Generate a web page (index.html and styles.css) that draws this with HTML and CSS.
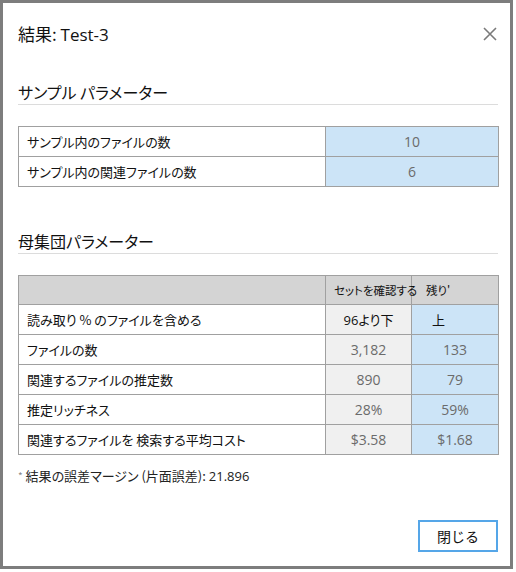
FILE: index.html
```html
<!DOCTYPE html>
<html lang="ja">
<head>
<meta charset="utf-8">
<link rel="stylesheet" href="styles.css">
</head>
<body>
<div class="dialog">
  <div class="titlebar">
    <div class="title">結果: <span class="lat">Test-3</span></div>
    <svg class="close" width="14" height="14" viewBox="0 0 14 14"><path d="M1 1L13 13M13 1L1 13" stroke="#7a7a7a" stroke-width="1.6" fill="none"/></svg>
  </div>

  <h2 class="section first">サンプル パラメーター</h2>
  <table class="grid t1">
    <colgroup><col class="w1"><col></colgroup>
    <tr><td class="label">サンプル内のファイルの数</td><td class="num blue">10</td></tr>
    <tr><td class="label">サンプル内の関連ファイルの数</td><td class="num blue">6</td></tr>
  </table>

  <h2 class="section second">母集団パラメーター</h2>
  <table class="grid t2">
    <colgroup><col class="w1"><col class="w2"><col></colgroup>
    <tr class="head"><th class="c1"></th><th class="c2">セットを確認する</th><th class="c3">残り'</th></tr>
    <tr><td class="label">読み取り % のファイルを含める</td><td class="gray dark"><span class="lat">96</span>より下</td><td class="blue dark left">上</td></tr>
    <tr><td class="label">ファイルの数</td><td class="num gray">3,182</td><td class="num blue">133</td></tr>
    <tr><td class="label">関連するファイルの推定数</td><td class="num gray">890</td><td class="num blue">79</td></tr>
    <tr><td class="label">推定リッチネス</td><td class="num gray">28%</td><td class="num blue">59%</td></tr>
    <tr><td class="label">関連するファイルを 検索する平均コスト</td><td class="num gray">$3.58</td><td class="num blue">$1.68</td></tr>
  </table>

  <p class="note"><span class="star">*</span> 結果の誤差マージン (片面誤差): <span class="lat">21.896</span></p>

  <div class="footer">
    <button class="btn">閉じる</button>
  </div>
</div>
</body>
</html>
```
FILE: styles.css
```css
html, body {
  margin: 0;
  padding: 0;
  background: #ffffff;
}
body {
  font-family: "Noto Sans CJK JP", "Noto Sans", sans-serif;
  font-feature-settings: "palt" 1;
  color: #1a1a1a;
}
.dialog {
  box-sizing: border-box;
  width: 513px;
  height: 569px;
  border: 3px solid #7d7d7d;
  padding: 0 12px 0 15px;
  display: flex;
  flex-direction: column;
}
.lat {
  font-family: "Open Sans", "Noto Sans", sans-serif;
}
.titlebar {
  display: flex;
  justify-content: space-between;
  align-items: center;
  height: 24px;
  margin-top: 19px;
}
.title {
  font-size: 17px;
  line-height: 24px;
  color: #111;
}
.close {
  margin-right: 1px;
}
.section {
  margin: 0;
  font-weight: normal;
  font-size: 16px;
  line-height: 22px;
  padding-bottom: 1px;
  border-bottom: 1px solid #dcdcdc;
  color: #111;
}
.section.first {
  margin-top: 35px;
}
.section.second {
  margin-top: 43px;
}
.grid {
  border-collapse: collapse;
  table-layout: fixed;
  width: 481px;
  font-size: 13px;
}
.grid col.w1 { width: 307px; }
.grid col.w2 { width: 86px; }
.grid td, .grid th {
  border: 1px solid #a0a0a0;
  padding: 0;
  height: 29px;
  line-height: 20px;
}
.t1 {
  margin-top: 21px;
}
.t2 {
  margin-top: 21px;
}
.label {
  padding-left: 8px !important;
  text-align: left;
  color: #111;
  background: #fff;
}
.num {
  text-align: center;
  color: #6b6b6b;
  font-family: "Open Sans", "Noto Sans", sans-serif;
  font-size: 14px;
}
.blue {
  background: #cce4f7;
}
.gray {
  background: #f0f0f0;
}
.dark {
  color: #111;
  text-align: center;
}
.left {
  text-align: left;
  padding-left: 20px !important;
}
.head th {
  background: #d4d4d4;
  font-weight: normal;
  font-size: 11.5px;
  color: #111;
  height: 28px;
}
.head .c2 { text-align: left; padding-left: 8px; white-space: nowrap; overflow: visible; }
.head .c3 { text-align: left; padding-left: 14px; }
.note {
  margin: 12px 0 0 0;
  font-size: 13px;
  line-height: 18px;
  color: #222;
}
.star {
  color: #888;
  font-size: 10px;
  vertical-align: top;
}
.footer {
  margin-top: auto;
  margin-bottom: 14px;
  display: flex;
  justify-content: flex-end;
}
.btn {
  width: 80px;
  height: 32px;
  background: #fff;
  border: 2px solid #55a6e8;
  font-family: "Noto Sans CJK JP", sans-serif;
  font-size: 14px;
  color: #111;
  padding: 0;
}
```
